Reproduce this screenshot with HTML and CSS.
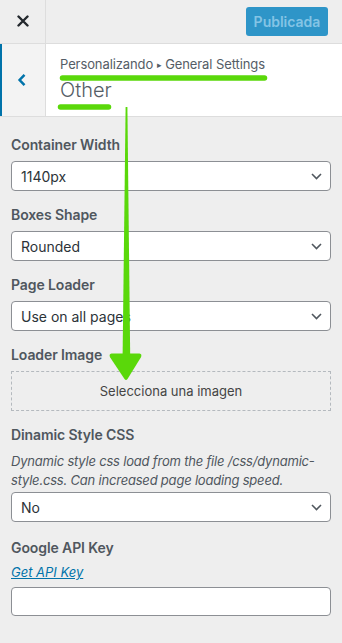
FILE: index.html
```html
<!DOCTYPE html>
<html lang="es">
<head>
<meta charset="utf-8">
<title>Other</title>
<link rel="stylesheet" href="styles.css">
</head>
<body>
<div class="page">
  <header class="topbar">
    <button class="close" aria-label="Cerrar">
      <svg width="12" height="12" viewBox="0 0 12 12"><path d="M1.5 1.5 L10.5 10.5 M10.5 1.5 L1.5 10.5" stroke="#23282d" stroke-width="2.4" stroke-linecap="round"/></svg>
    </button>
    <button class="publish">Publicada</button>
  </header>

  <section class="sec-head">
    <button class="back" aria-label="Volver">
      <svg width="10" height="14" viewBox="0 0 10 14"><path d="M7.5 1.8 L2.6 7 L7.5 12.2" fill="none" stroke="#0073aa" stroke-width="2.5" stroke-linejoin="miter"/></svg>
    </button>
    <div class="titles">
      <div class="crumb">Personalizando <span class="tri">▸</span> General Settings</div>
      <div class="title">Other</div>
    </div>
  </section>

  <main class="controls">
    <div class="control">
      <div class="label">Container Width</div>
      <div class="select"><span>1140px</span><svg class="chev" width="11" height="7" viewBox="0 0 11 7"><path d="M1 1 L5.5 5.5 L10 1" fill="none" stroke="#50575e" stroke-width="1.6"/></svg></div>
    </div>
    <div class="control">
      <div class="label">Boxes Shape</div>
      <div class="select"><span>Rounded</span><svg class="chev" width="11" height="7" viewBox="0 0 11 7"><path d="M1 1 L5.5 5.5 L10 1" fill="none" stroke="#50575e" stroke-width="1.6"/></svg></div>
    </div>
    <div class="control">
      <div class="label">Page Loader</div>
      <div class="select"><span>Use on all pages</span><svg class="chev" width="11" height="7" viewBox="0 0 11 7"><path d="M1 1 L5.5 5.5 L10 1" fill="none" stroke="#50575e" stroke-width="1.6"/></svg></div>
    </div>
    <div class="control">
      <div class="label">Loader Image</div>
      <div class="upload">Selecciona una imagen</div>
    </div>
    <div class="control">
      <div class="label">Dinamic Style CSS</div>
      <p class="desc">Dynamic style css load from the file /css/dynamic-style.css. Can increased page loading speed.</p>
      <div class="select"><span>No</span><svg class="chev" width="11" height="7" viewBox="0 0 11 7"><path d="M1 1 L5.5 5.5 L10 1" fill="none" stroke="#50575e" stroke-width="1.6"/></svg></div>
    </div>
    <div class="control api">
      <div class="label">Google API Key</div>
      <a class="link" href="#">Get API Key</a>
      <div class="input"></div>
    </div>
  </main>

  <svg class="annot" width="342" height="643" viewBox="0 0 342 643">
    <line x1="62.5" y1="78" x2="264.5" y2="78" stroke="#5ad80a" stroke-width="5.5" stroke-linecap="round"/>
    <line x1="60.5" y1="107" x2="108.5" y2="107" stroke="#5ad80a" stroke-width="5.5" stroke-linecap="round"/>
    <path d="M125.6 107 L127.4 107 L130.2 357 L122.6 357 Z" fill="#5ad80a"/>
    <path d="M111.5 353.5 L139.5 353.5 Q142.5 354 140.8 357.5 L127.5 379 Q126 381 124.5 379 L110.2 357.5 Q108.5 354 111.5 353.5 Z" fill="#5ad80a"/>
  </svg>
</div>
</body>
</html>
```

FILE: styles.css
```css
* { box-sizing: border-box; }

html, body {
  margin: 0;
  padding: 0;
}

body {
  background: #eeeeee;
  font-family: Inter, "Noto Sans", sans-serif;
  color: #50575e;
  width: 342px;
  height: 643px;
  overflow: hidden;
}

.page {
  position: relative;
  min-height: 643px;
}

.topbar {
  display: flex;
  align-items: center;
  height: 44px;
  border-bottom: 1px solid #dddddd;
  background: #eeeeee;
}

.close {
  width: 46px;
  height: 43px;
  border: 0;
  border-right: 1px solid #dddddd;
  background: transparent;
  display: flex;
  align-items: center;
  justify-content: center;
  padding: 0 0 1px 0;
}

.publish {
  margin-left: auto;
  margin-right: 14px;
  margin-bottom: 1px;
  width: 82px;
  height: 29px;
  border: 0;
  border-radius: 3px;
  background: #2e95c8;
  color: #84c4e5;
  font-family: Inter, "Noto Sans", sans-serif;
  font-size: 14px;
  font-weight: 600;
  padding: 0;
}

.sec-head {
  display: flex;
  height: 73px;
  background: #ffffff;
  border-bottom: 1px solid #dddddd;
}

.back {
  width: 46px;
  height: 100%;
  border: 0;
  border-left: 2px solid #0073aa;
  border-right: 1px solid #dddddd;
  background: #f3f3f3;
  display: flex;
  align-items: center;
  justify-content: center;
  padding: 0 4px 0 0;
}

.titles {
  padding: 10px 0 0 14px;
}

.crumb {
  font-size: 13px;
  line-height: 20px;
  color: #555d66;
  letter-spacing: -0.1px;
}

.tri {
  font-size: 9px;
  vertical-align: 1px;
}

.title {
  font-size: 20px;
  font-weight: 300;
  line-height: 26px;
  color: #555d66;
  margin-top: 2px;
}

.controls {
  padding: 18px 11px 0 11px;
  display: flex;
  flex-direction: column;
  gap: 14px;
}

.control {
  display: flex;
  flex-direction: column;
}

.label {
  font-size: 14px;
  font-weight: 600;
  line-height: 20px;
  color: #50575e;
  margin-bottom: 6px;
  letter-spacing: -0.1px;
}

.select {
  height: 30px;
  background: #ffffff;
  border: 1px solid #8c8f94;
  border-radius: 4px;
  display: flex;
  align-items: center;
  justify-content: space-between;
  padding: 0 8px 0 9px;
  font-size: 14px;
  color: #2c3338;
}

.upload {
  height: 40px;
  border: 1px dashed #b4b9be;
  display: flex;
  align-items: center;
  justify-content: center;
  font-size: 13px;
  color: #444444;
}

.desc {
  margin: 1px 0 2px 0;
  font-size: 13px;
  font-style: italic;
  line-height: 19px;
  color: #50575e;
  letter-spacing: -0.2px;
}

.api {
  margin-top: 2px;
}

.link {
  font-size: 13px;
  font-style: italic;
  line-height: 19px;
  color: #0073aa;
  text-decoration: underline;
  margin-top: -1px;
  margin-bottom: 5px;
}

.input {
  height: 29px;
  background: #ffffff;
  border: 1px solid #8c8f94;
  border-radius: 4px;
}

.annot {
  position: absolute;
  left: 0;
  top: 0;
  pointer-events: none;
}
```
